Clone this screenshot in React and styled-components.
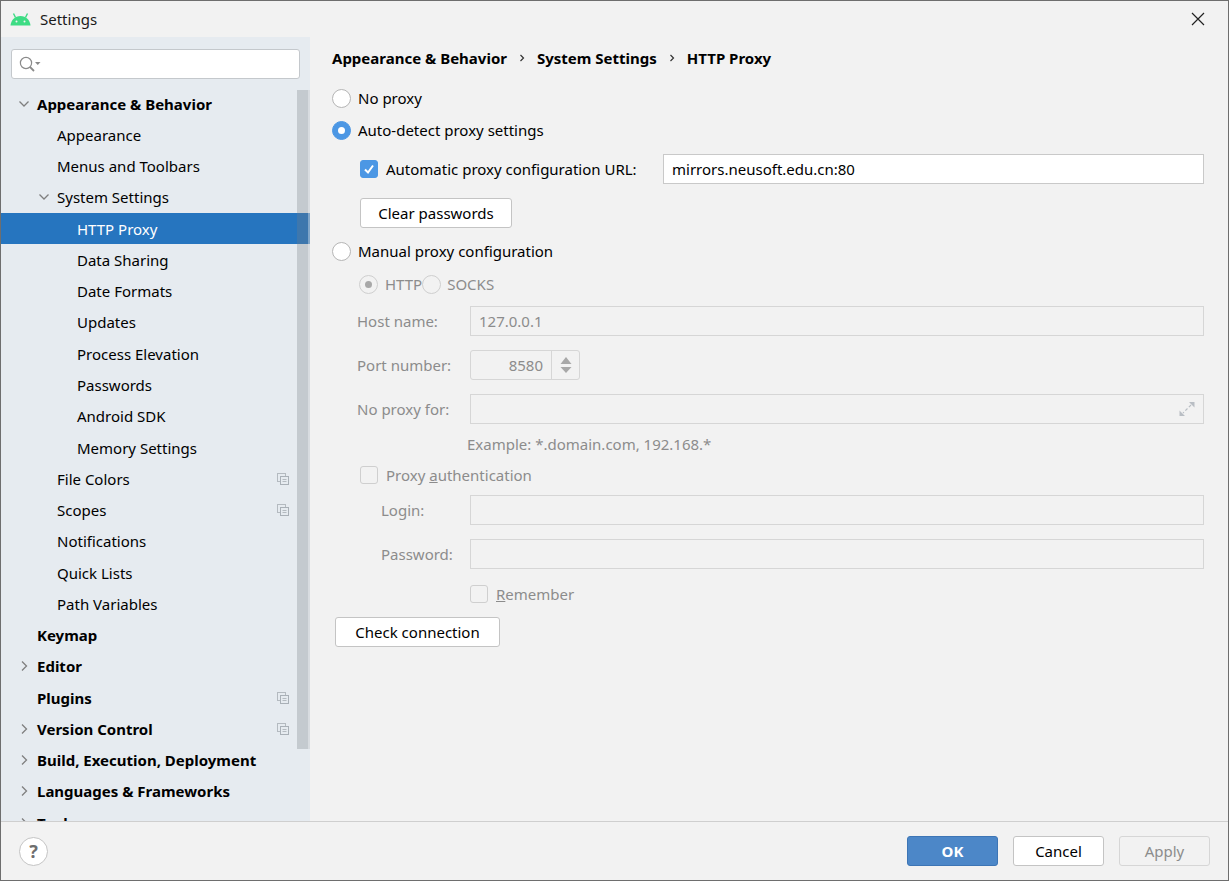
import React from 'react';
import styled, { createGlobalStyle } from 'styled-components';

const GlobalStyle = createGlobalStyle`
    html, body {
        margin: 0;
        padding: 0;
        height: 100%;
    }
    body {
        font-family: "Noto Sans", "Open Sans", sans-serif;
        font-size: 15px;
        color: #000;
        background: #f2f2f2;
        overflow: hidden;
    }
`;

const Window = styled.div`
    box-sizing: border-box;
    width: 1229px;
    height: 881px;
    border: 1px solid #6e6e6e;
    border-width: 1px 1px 1px 1px;
    background: #f2f2f2;
    display: flex;
    flex-direction: column;
`;

const TitleBar = styled.div`
    height: 36px;
    flex: none;
    display: flex;
    align-items: center;
    padding: 0 23px 0 9px;
    gap: 9px;
    font-size: 15px;
    color: #1a1a1a;
`;

const Title = styled.span`
    flex: 1;
`;

const Body = styled.div`
    flex: 1;
    min-height: 0;
    display: flex;
`;

const Sidebar = styled.aside`
    width: 309px;
    flex: none;
    background: #e6ebf0;
    position: relative;
    overflow: hidden;
    display: flex;
    flex-direction: column;
`;

const SearchBox = styled.div`
    box-sizing: border-box;
    height: 30px;
    margin: 12px 10px 9px;
    flex: none;
    background: #fff;
    border: 1px solid #c4c8cc;
    border-radius: 3px;
    display: flex;
    align-items: center;
    padding-left: 6px;
`;

const Tree = styled.div`
    display: flex;
    flex-direction: column;
`;

const TreeRow = styled.div`
    height: 31.27px;
    flex: none;
    display: flex;
    align-items: center;
    padding-left: ${p => 16 + p.$level * 20}px;
    padding-right: 21px;
    font-weight: ${p => (p.$level === 0 ? 700 : 400)};
    background: ${p => (p.$selected ? '#2675bf' : 'transparent')};
    color: ${p => (p.$selected ? '#fff' : '#000')};
`;

const ChevronSlot = styled.span`
    width: 20px;
    height: 14px;
    flex: none;
    display: flex;
    align-items: center;
`;

const RowLabel = styled.span`
    flex: 1;
    white-space: nowrap;
`;

const ScrollThumb = styled.div`
    position: absolute;
    top: 53px;
    right: 0;
    width: 13px;
    height: 659px;
    box-sizing: border-box;
    background: rgba(120, 125, 132, 0.3);
    border-right: 2px solid rgba(255, 255, 255, 0.35);
`;

const Main = styled.main`
    flex: 1;
    min-width: 0;
    padding: 0 24px 0 22px;
`;

const Breadcrumbs = styled.div`
    height: 41px;
    display: flex;
    align-items: center;
    font-weight: 700;
    gap: 10px;
`;

const Row = styled.div`
    display: flex;
    align-items: center;
    height: ${p => p.$h || 32}px;
    margin-top: ${p => p.$mt || 0}px;
    padding-left: ${p => p.$pl || 0}px;
    color: ${p => (p.$disabled ? '#8c8c8c' : '#000')};
`;

const Radio = styled.span`
    box-sizing: border-box;
    width: 19px;
    height: 19px;
    flex: none;
    border-radius: 50%;
    margin-right: ${p => p.$mr || 7}px;
    display: flex;
    align-items: center;
    justify-content: center;
    background: ${p => (p.$checked ? '#4c97e4' : p.$disabled ? '#f2f2f2' : '#fff')};
    border: 1px solid ${p => (p.$checked ? '#4c97e4' : p.$disabled ? '#cfcfcf' : '#b5b5b5')};

    &::after {
        content: '';
        display: ${p => (p.$checked || p.$dot ? 'block' : 'none')};
        width: 7px;
        height: 7px;
        border-radius: 50%;
        background: ${p => (p.$dot ? '#a8a8a8' : '#fff')};
    }
`;

const Check = styled.span`
    box-sizing: border-box;
    width: 18px;
    height: 18px;
    flex: none;
    border-radius: 3px;
    margin-right: 8px;
    display: flex;
    align-items: center;
    justify-content: center;
    background: ${p => (p.$checked ? '#4c97e4' : '#f2f2f2')};
    border: 1px solid ${p => (p.$checked ? '#4c97e4' : '#cfcfcf')};
`;

const TextInput = styled.div`
    box-sizing: border-box;
    height: ${p => p.$h || 30}px;
    flex: 1;
    display: flex;
    align-items: center;
    justify-content: flex-end;
    padding: 0 8px;
    background: ${p => (p.$disabled ? '#f2f2f2' : '#fff')};
    border: 1px solid ${p => (p.$disabled ? '#d6d6d6' : '#c9c9c9')};
    color: ${p => (p.$disabled ? '#8c8c8c' : '#000')};
`;

const Value = styled.span`
    flex: 1;
`;

const Label = styled.span`
    width: ${p => p.$w}px;
    flex: none;
`;

const Spinner = styled.div`
    box-sizing: border-box;
    width: 110px;
    height: 30px;
    display: flex;
    align-items: center;
    border: 1px solid #d6d6d6;
    border-radius: 3px;
`;

const SpinnerValue = styled.span`
    flex: 1;
    text-align: right;
    padding-right: 8px;
`;

const SpinnerArrows = styled.span`
    width: 27px;
    height: 100%;
    border-left: 1px solid #d6d6d6;
    display: flex;
    align-items: center;
    justify-content: center;
`;

const Button = styled.button`
    box-sizing: border-box;
    height: 30px;
    width: ${p => p.$w}px;
    flex: none;
    margin: 0;
    padding: 0;
    font: inherit;
    font-weight: ${p => (p.$primary ? 700 : 400)};
    border-radius: 3px;
    color: ${p => (p.$primary ? '#fff' : p.disabled ? '#8c8c8c' : '#000')};
    background: ${p => (p.$primary ? '#4c87c8' : p.disabled ? '#f2f2f2' : '#fff')};
    border: 1px solid ${p => (p.$primary ? '#3d75b5' : p.disabled ? '#d6d6d6' : '#c4c4c4')};
`;

const Footer = styled.footer`
    height: 59px;
    flex: none;
    box-sizing: border-box;
    border-top: 1px solid #cfcfcf;
    display: flex;
    align-items: center;
    padding: 0 18px 0 18px;
    gap: 15px;
`;

const HelpButton = styled.span`
    box-sizing: border-box;
    width: 29px;
    height: 29px;
    margin-right: auto;
    border-radius: 50%;
    background: #fff;
    border: 1px solid #c4c4c4;
    display: flex;
    align-items: center;
    justify-content: center;
    font-weight: 700;
    font-size: 18px;
    color: #6e6e6e;
`;

const Mnemonic = styled.span`
    text-decoration: underline;
`;

const AndroidLogo = () => (
    <svg width="21" height="14" viewBox="0 0 21 14">
        <path d="M0.5 13.5C1 8 5 4 10.5 4S20 8 20.5 13.5Z" fill="#3ddc84" />
        <path d="M5.5 5.5 3.5 1.5M15.5 5.5 17.5 1.5" stroke="#3ddc84" strokeWidth="1.4" />
        <circle cx="6.5" cy="9.5" r="1" fill="#f2f2f2" />
        <circle cx="14.5" cy="9.5" r="1" fill="#f2f2f2" />
    </svg>
);

const CloseIcon = () => (
    <svg width="14" height="14" viewBox="0 0 14 14">
        <path d="M1 1 13 13M13 1 1 13" stroke="#222" strokeWidth="1.2" fill="none" />
    </svg>
);

const SearchIcon = () => (
    <svg width="28" height="18" viewBox="0 0 28 18">
        <circle cx="8" cy="8" r="5.6" fill="none" stroke="#8a8a8a" strokeWidth="1.2" />
        <path d="M12 12 16 16" stroke="#8a8a8a" strokeWidth="1.8" />
        <path d="M17 7H22.5L19.75 10Z" fill="#8a8a8a" />
    </svg>
);

const Chevron = ({ open }) => (
    <svg width="14" height="14" viewBox="0 0 14 14">
        <path
            d={open ? 'M2.5 4.5 7 9 11.5 4.5' : 'M5 2.5 9.5 7 5 11.5'}
            fill="none"
            stroke="#7f7f7f"
            strokeWidth="1.3"
        />
    </svg>
);

const CrumbArrow = () => (
    <svg width="10" height="10" viewBox="0 0 10 10">
        <path d="M3.5 2 6.5 5 3.5 8" fill="none" stroke="#333" strokeWidth="1.2" />
    </svg>
);

const ProjectIcon = () => (
    <svg width="12" height="12" viewBox="0 0 12 12">
        <path d="M0.5 8.5V0.5H8.5" fill="none" stroke="#b4bac0" strokeWidth="1" />
        <rect x="0.5" y="0.5" width="8" height="8" fill="none" stroke="#b4bac0" />
        <rect x="3.5" y="3.5" width="8" height="8" fill="#e6ebf0" stroke="#a9b0b7" />
        <path d="M5.5 6.5H9.5M5.5 8.5H9.5" stroke="#b4bac0" />
    </svg>
);

const CheckMark = () => (
    <svg width="14" height="14" viewBox="0 0 14 14">
        <path d="M3 7.5 6 10.5 11 3.5" fill="none" stroke="#fff" strokeWidth="2" />
    </svg>
);

const SpinArrows = () => (
    <svg width="12" height="18" viewBox="0 0 12 18">
        <path d="M6 1 11.5 8H0.5Z" fill="#a8a8a8" />
        <path d="M0.5 11H11.5L6 17Z" fill="#a8a8a8" />
    </svg>
);

const ExpandIcon = () => (
    <svg width="16" height="16" viewBox="0 0 16 16">
        <path d="M10 1H15.5V6.5Z M6 15H0.5V9.5Z" fill="#b9bec4" />
        <path d="M12 4 4 12" stroke="#b9bec4" strokeWidth="1.2" strokeDasharray="3 2" />
    </svg>
);

const treeItems = [
    { label: 'Appearance & Behavior', level: 0, open: true },
    { label: 'Appearance', level: 1 },
    { label: 'Menus and Toolbars', level: 1 },
    { label: 'System Settings', level: 1, open: true },
    { label: 'HTTP Proxy', level: 2, selected: true },
    { label: 'Data Sharing', level: 2 },
    { label: 'Date Formats', level: 2 },
    { label: 'Updates', level: 2 },
    { label: 'Process Elevation', level: 2 },
    { label: 'Passwords', level: 2 },
    { label: 'Android SDK', level: 2 },
    { label: 'Memory Settings', level: 2 },
    { label: 'File Colors', level: 1, project: true },
    { label: 'Scopes', level: 1, project: true },
    { label: 'Notifications', level: 1 },
    { label: 'Quick Lists', level: 1 },
    { label: 'Path Variables', level: 1 },
    { label: 'Keymap', level: 0 },
    { label: 'Editor', level: 0, open: false },
    { label: 'Plugins', level: 0, project: true },
    { label: 'Version Control', level: 0, open: false, project: true },
    { label: 'Build, Execution, Deployment', level: 0, open: false },
    { label: 'Languages & Frameworks', level: 0, open: false },
    { label: 'Tools', level: 0, open: false },
];

const App = () => (
    <Window>
        <GlobalStyle />
        <TitleBar>
            <AndroidLogo />
            <Title>Settings</Title>
            <CloseIcon />
        </TitleBar>
        <Body>
            <Sidebar>
                <SearchBox>
                    <SearchIcon />
                </SearchBox>
                <Tree>
                    {treeItems.map(item => (
                        <TreeRow key={item.label} $level={item.level} $selected={item.selected}>
                            <ChevronSlot>
                                {item.open !== undefined && <Chevron open={item.open} />}
                            </ChevronSlot>
                            <RowLabel>{item.label}</RowLabel>
                            {item.project && <ProjectIcon />}
                        </TreeRow>
                    ))}
                </Tree>
                <ScrollThumb />
            </Sidebar>
            <Main>
                <Breadcrumbs>
                    <span>Appearance &amp; Behavior</span>
                    <CrumbArrow />
                    <span>System Settings</span>
                    <CrumbArrow />
                    <span>HTTP Proxy</span>
                </Breadcrumbs>
                <Row $mt={4}><Radio />No proxy</Row>
                <Row><Radio $checked />Auto-detect proxy settings</Row>
                <Row $h={30} $mt={8} $pl={28}>
                    <Check $checked><CheckMark /></Check>
                    <Label $w={277}>Automatic proxy configuration URL:</Label>
                    <TextInput><Value>mirrors.neusoft.edu.cn:80</Value></TextInput>
                </Row>
                <Row $h={30} $mt={14} $pl={28}>
                    <Button $w={152}>Clear passwords</Button>
                </Row>
                <Row $mt={7}><Radio />Manual proxy configuration</Row>
                <Row $mt={1} $pl={27} $disabled>
                    <Radio $disabled $dot />HTTP
                    <Radio $disabled style={undefined} $mr={6} />
                    SOCKS
                </Row>
                <Row $h={30} $mt={6} $pl={25} $disabled>
                    <Label $w={113}>Host name:</Label>
                    <TextInput $disabled><Value>127.0.0.1</Value></TextInput>
                </Row>
                <Row $h={30} $mt={14} $pl={25} $disabled>
                    <Label $w={113}>Port number:</Label>
                    <Spinner>
                        <SpinnerValue>8580</SpinnerValue>
                        <SpinnerArrows><SpinArrows /></SpinnerArrows>
                    </Spinner>
                </Row>
                <Row $h={30} $mt={14} $pl={25} $disabled>
                    <Label $w={113}>No proxy for:</Label>
                    <TextInput $disabled><ExpandIcon /></TextInput>
                </Row>
                <Row $h={24} $mt={8} $pl={135} $disabled>Example: *.domain.com, 192.168.*</Row>
                <Row $h={24} $mt={7} $pl={28} $disabled>
                    <Check />
                    <span>Proxy <Mnemonic>a</Mnemonic>uthentication</span>
                </Row>
                <Row $h={30} $mt={8} $pl={49} $disabled>
                    <Label $w={89}>Login:</Label>
                    <TextInput $disabled />
                </Row>
                <Row $h={30} $mt={14} $pl={49} $disabled>
                    <Label $w={89}>Password:</Label>
                    <TextInput $disabled />
                </Row>
                <Row $h={24} $mt={13} $pl={138} $disabled>
                    <Check />
                    <span><Mnemonic>R</Mnemonic>emember</span>
                </Row>
                <Row $h={30} $mt={11} $pl={3}>
                    <Button $w={165}>Check connection</Button>
                </Row>
            </Main>
        </Body>
        <Footer>
            <HelpButton>?</HelpButton>
            <Button $w={91} $primary>OK</Button>
            <Button $w={91}>Cancel</Button>
            <Button $w={91} disabled>Apply</Button>
        </Footer>
    </Window>
);

export default App;
